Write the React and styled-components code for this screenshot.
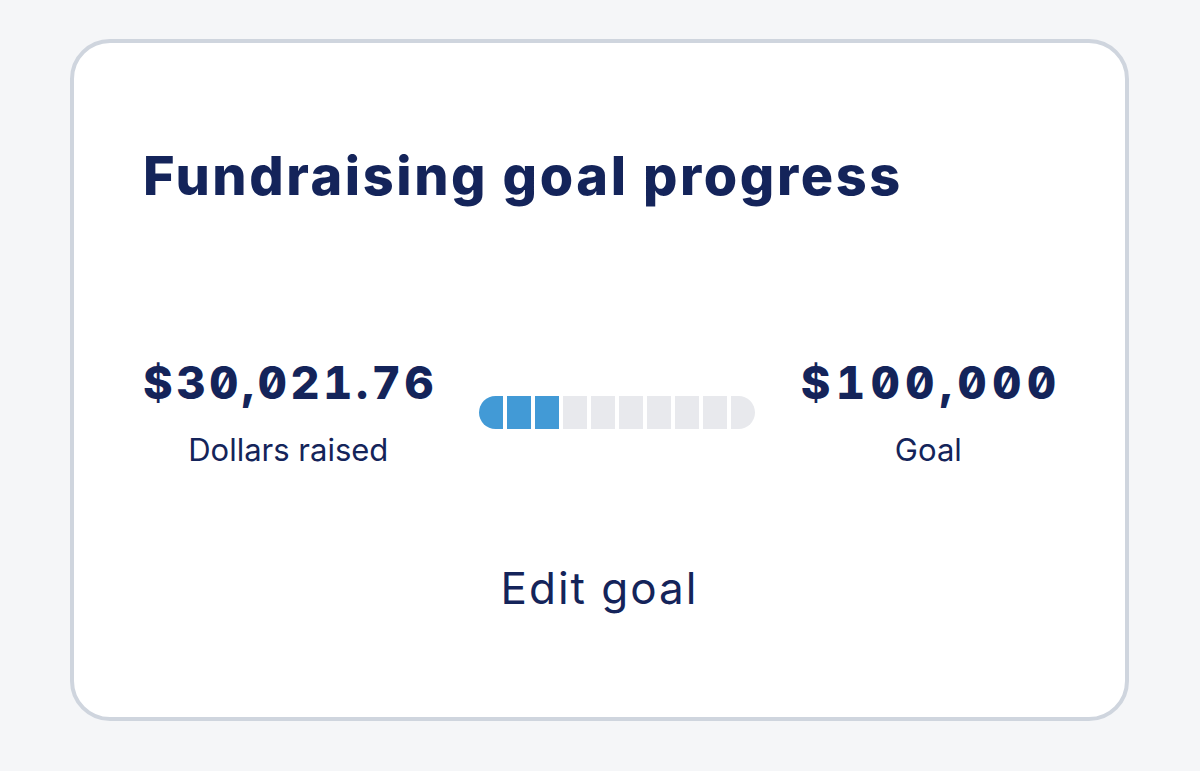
import React from "react";
import styled, { createGlobalStyle } from "styled-components";

const Global = createGlobalStyle`
  html, body { margin: 0; padding: 0; background: #f5f6f8; }
  body { font-family: Inter, "Noto Sans", sans-serif; color: #14245a; }
`;

const Page = styled.div`
  width: 1200px;
  height: 771px;
  padding: 39px 71px 0 70px;
  box-sizing: border-box;
`;

const Card = styled.section`
  box-sizing: border-box;
  width: 1059px;
  height: 682px;
  background: #ffffff;
  border: 4px solid #cfd5de;
  border-radius: 40px;
  padding: 106px 69px 0 69px;
  display: flex;
  flex-direction: column;
`;

const Title = styled.h1`
  margin: 0;
  font-size: 54px;
  font-weight: 800;
  letter-spacing: 2.6px;
  line-height: 1;
  color: #14245a;
`;

const Row = styled.div`
  margin-top: 157px;
  display: flex;
  align-items: center;
  justify-content: space-between;
`;

const Stat = styled.div`
  display: flex;
  flex-direction: column;
  align-items: center;
`;

const Amount = styled.div`
  font-size: 45px;
  font-weight: 800;
  line-height: 1;
  letter-spacing: ${(p) => p.$tracking}px;
  margin-right: -${(p) => p.$tracking}px;
  font-feature-settings: "zero" 1, "tnum" 1;
  color: #14245a;
`;

const Label = styled.div`
  margin-top: 29px;
  font-size: 31px;
  font-weight: 400;
  line-height: 1;
  color: #14245a;
`;

const Bar = styled.div`
  display: flex;
  gap: 4px;
  height: 33px;
`;

const Segment = styled.div`
  width: 24px;
  height: 100%;
  background: ${(p) => (p.$filled ? "#429ad6" : "#e8e9ed")};
  border-radius: ${(p) =>
    p.$first ? "17px 0 0 17px" : p.$last ? "0 17px 17px 0" : "0"};
`;

const EditButton = styled.button`
  align-self: center;
  margin-top: 96px;
  background: none;
  border: none;
  padding: 0;
  font-family: Inter, "Noto Sans", sans-serif;
  font-size: 44px;
  font-weight: 400;
  letter-spacing: 2px;
  color: #14245a;
  cursor: pointer;
`;

export default function App() {
  const total = 10;
  const filled = 3;
  return (
    <>
      <Global />
      <Page>
        <Card>
          <Title>Fundraising goal progress</Title>
          <Row>
            <Stat>
              <Amount $tracking={3.7}>$30,021.76</Amount>
              <Label>Dollars raised</Label>
            </Stat>
            <Bar>
              {Array.from({ length: total }).map((_, i) => (
                <Segment
                  key={i}
                  $filled={i < filled}
                  $first={i === 0}
                  $last={i === total - 1}
                />
              ))}
            </Bar>
            <Stat>
              <Amount $tracking={5.6}>$100,000</Amount>
              <Label>Goal</Label>
            </Stat>
          </Row>
          <EditButton>Edit goal</EditButton>
        </Card>
      </Page>
    </>
  );
}
